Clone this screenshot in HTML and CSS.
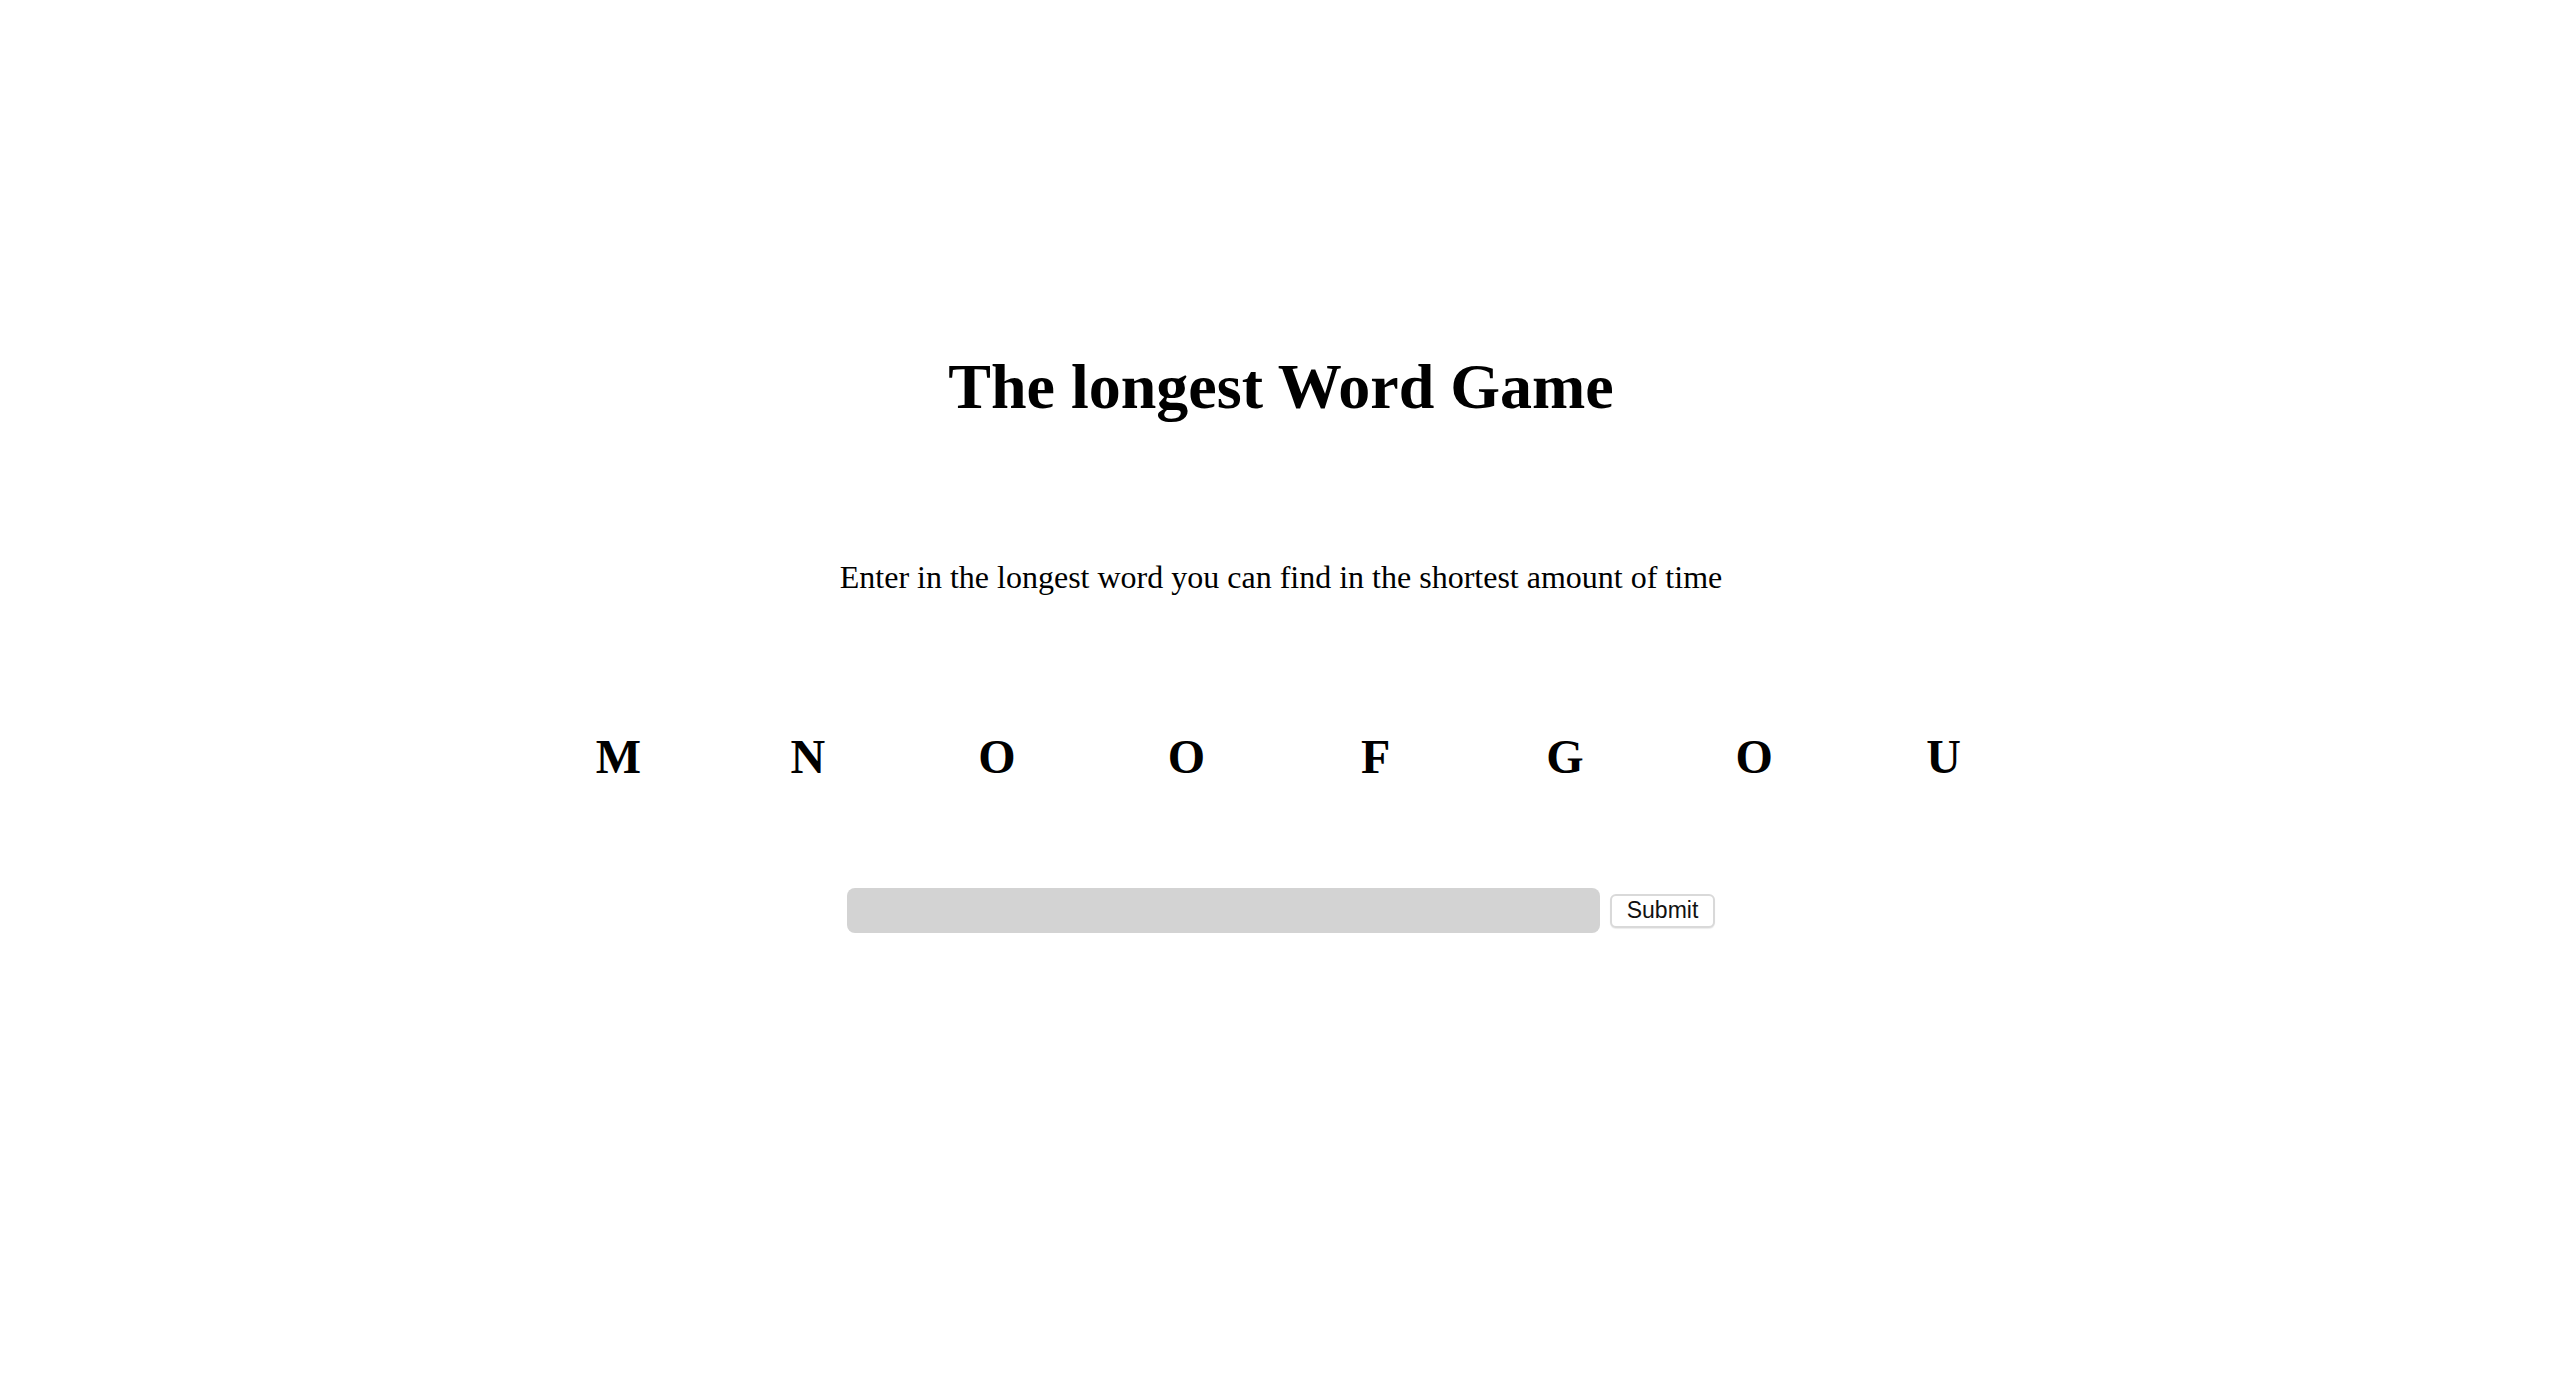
FILE: index.html
```html
<!DOCTYPE html>
<html lang="en">
<head>
<meta charset="utf-8">
<title>The longest Word Game</title>
<link rel="stylesheet" href="styles.css">
</head>
<body>
<main class="game">
  <h1 class="title">The longest Word Game</h1>
  <p class="intro">Enter in the longest word you can find in the shortest amount of time</p>
  <div class="letters">
    <span class="letter">M</span>
    <span class="letter">N</span>
    <span class="letter">O</span>
    <span class="letter">O</span>
    <span class="letter">F</span>
    <span class="letter">G</span>
    <span class="letter">O</span>
    <span class="letter">U</span>
  </div>
  <form class="entry" onsubmit="return false;">
    <input class="word-input" type="text" aria-label="Word">
    <button class="submit" type="submit">Submit</button>
  </form>
</main>
</body>
</html>
```

FILE: styles.css
```css
html, body {
  margin: 0;
  padding: 0;
  background: #ffffff;
}

body {
  font-family: "Liberation Serif", "Times New Roman", serif;
  color: #000;
}

.game {
  display: flex;
  flex-direction: column;
  align-items: center;
  padding: 350px 13px 0 19px;
}

.title {
  margin: 0;
  font-size: 64px;
  font-weight: bold;
  line-height: normal;
}

.intro {
  margin: 135px 0 0;
  font-size: 32px;
  line-height: normal;
}

.letters {
  margin-top: 133px;
  width: 60%;
  display: grid;
  grid-template-columns: repeat(8, 1fr);
}

.letter {
  text-align: center;
  font-size: 48px;
  font-weight: bold;
  line-height: normal;
}

.entry {
  margin-top: 104px;
  display: flex;
  align-items: center;
  gap: 10px;
}

.word-input {
  width: 753px;
  height: 45px;
  box-sizing: border-box;
  border: none;
  border-radius: 8px;
  background: #d3d3d3;
  padding: 0 10px;
  font-size: 24px;
  outline: none;
}

.submit {
  height: 34px;
  box-sizing: border-box;
  padding: 0 15px;
  border: 2px solid #d9d9d9;
  border-radius: 6px;
  background: #ffffff;
  font-family: "Liberation Sans", Arial, sans-serif;
  font-size: 23px;
  color: #111;
  box-shadow: 0 1px 1px rgba(0,0,0,0.08);
}
```
